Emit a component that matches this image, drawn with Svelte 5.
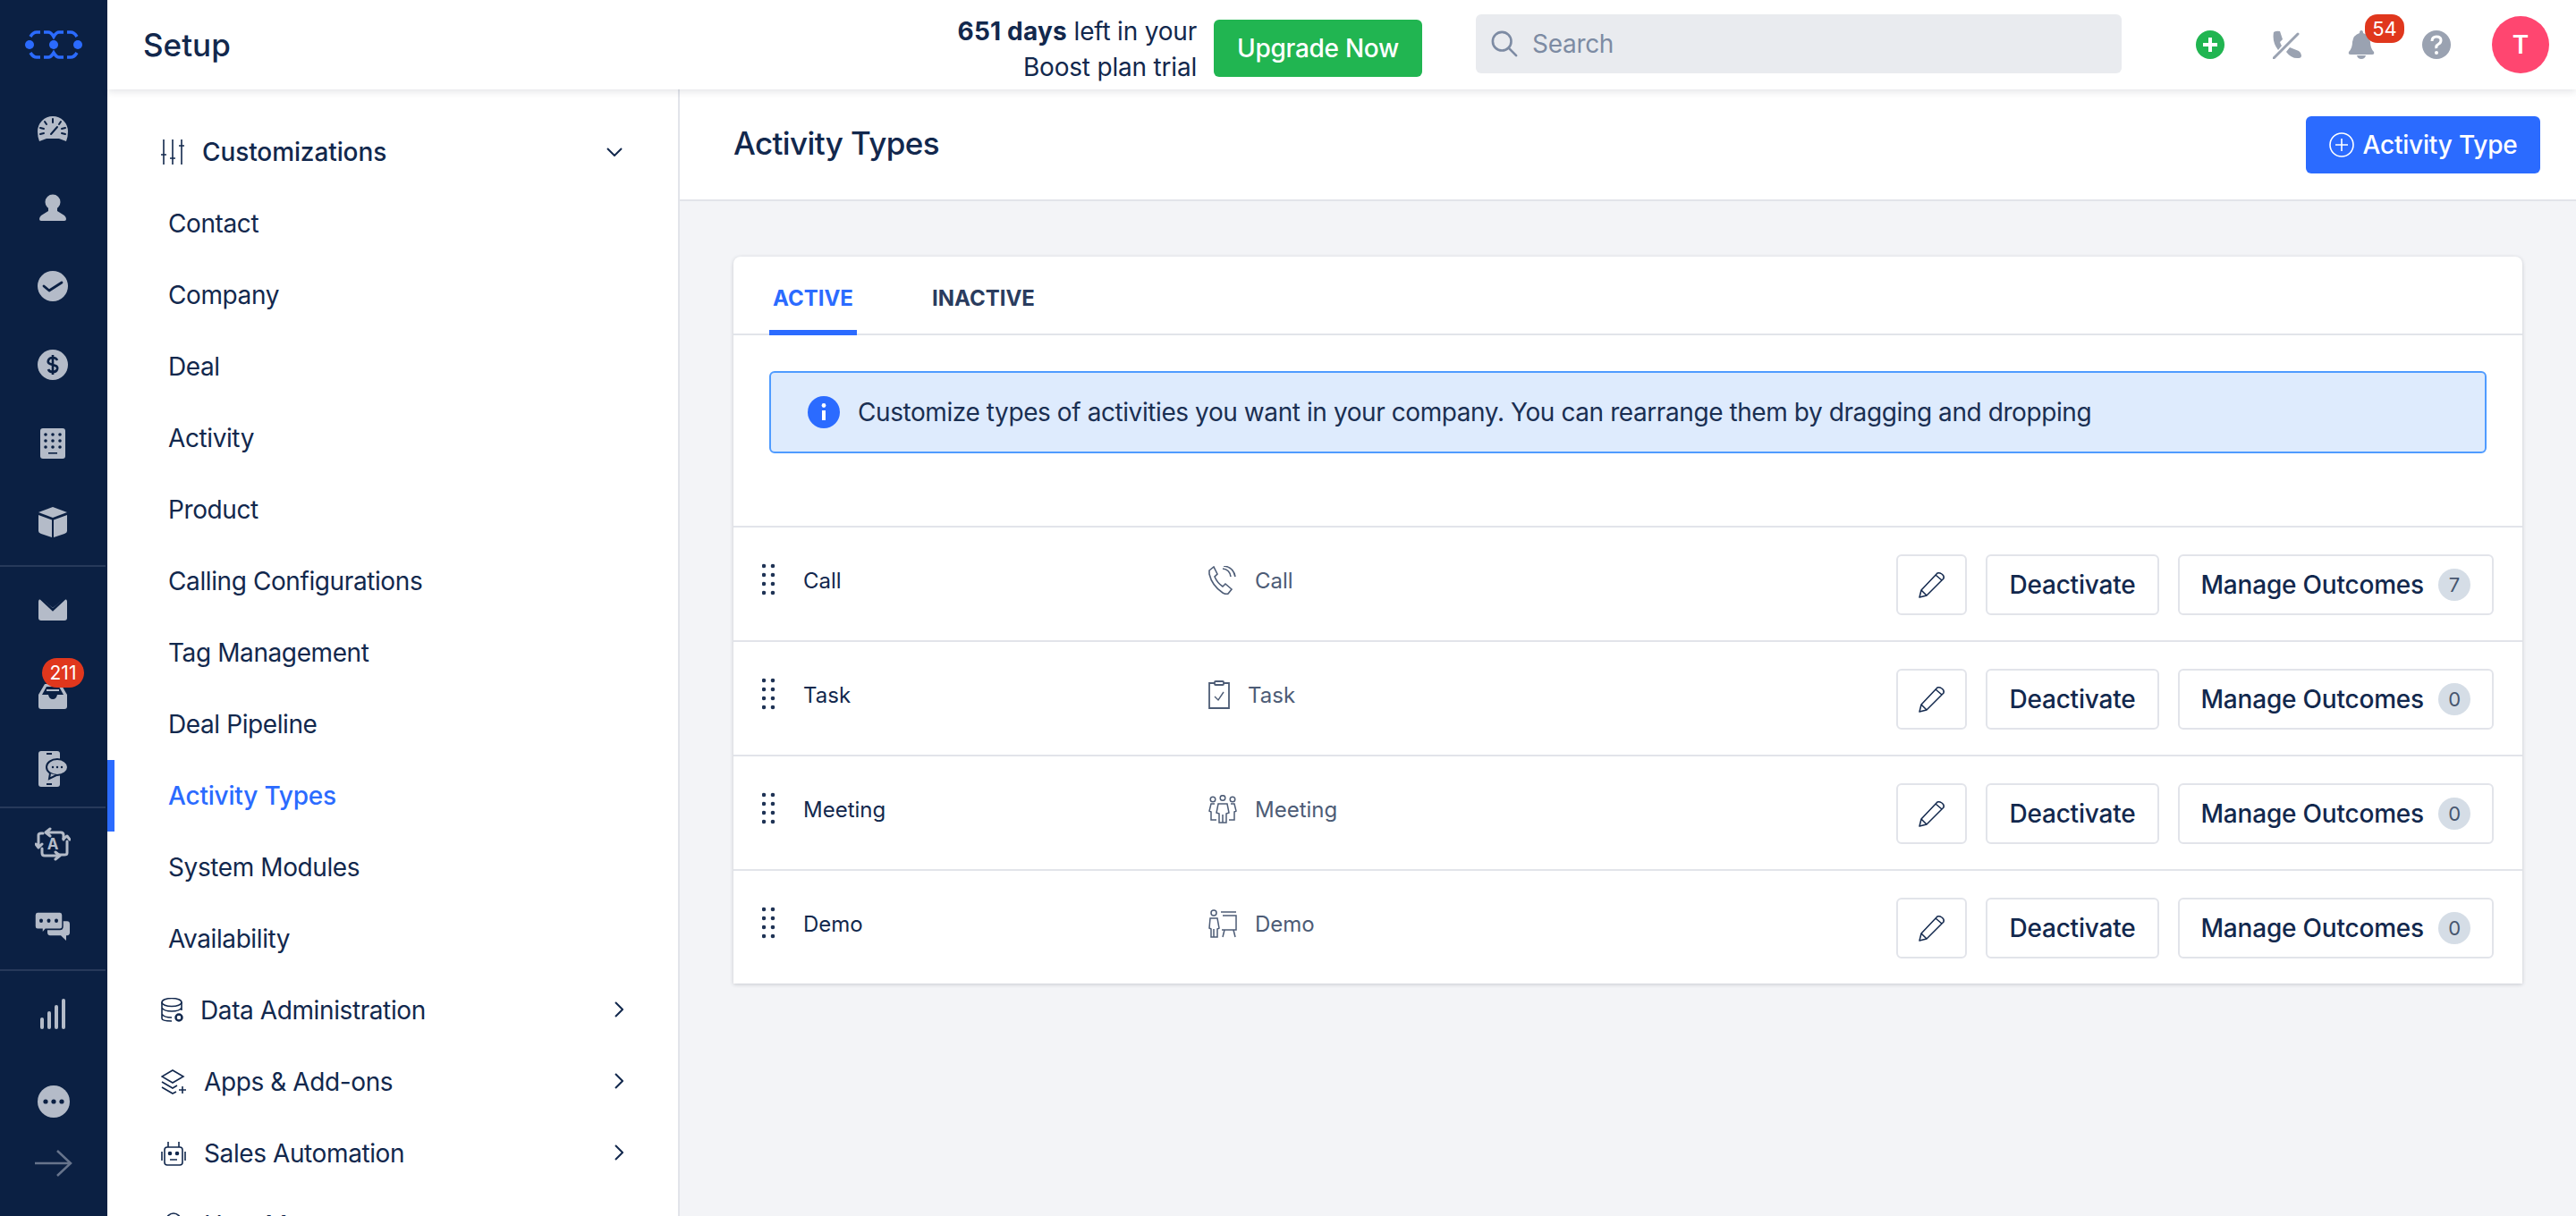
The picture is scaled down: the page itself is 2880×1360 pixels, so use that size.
<script>
  const sideItems = ['Contact', 'Company', 'Deal', 'Activity', 'Product', 'Calling Configurations', 'Tag Management', 'Deal Pipeline', 'Activity Types', 'System Modules', 'Availability'];

  const rows = [
    { name: 'Call', kind: 'call', outcomes: 7 },
    { name: 'Task', kind: 'task', outcomes: 0 },
    { name: 'Meeting', kind: 'meeting', outcomes: 0 },
    { name: 'Demo', kind: 'demo', outcomes: 0 }
  ];

  const dots = [[2, 4], [12, 4], [2, 14], [12, 14], [2, 24], [12, 24], [2, 34], [12, 34]];
</script>

<div class="shell">
  <nav class="rail">
    <div class="logo">
      <svg width="66" height="34" viewBox="0 0 66 34" fill="none" stroke="#2b6bff" stroke-width="3.5">
        <circle cx="6" cy="17" r="5" fill="#2b6bff" stroke="none" />
        <circle cx="33" cy="17" r="5" fill="#2b6bff" stroke="none" />
        <circle cx="60" cy="17" r="5" fill="#2b6bff" stroke="none" />
        <path d="M18 3h-4q-4 0-7 5M18 31h-4q-4 0-7-5" />
        <path d="M22 3h5q3 0 6 5q3-5 6-5h5M22 31h5q3 0 6-5q3 5 6 5h5" />
        <path d="M48 3h4q4 0 7 5M48 31h4q4 0 7-5" />
      </svg>
    </div>

    <div class="rail-group">
      <div class="rail-item">
        <svg width="36" height="32" viewBox="0 0 36 32">
          <path d="M1 19a17 17 0 0 1 34 0q0 6-2 11l-8-3H11l-8 3q-2-5-2-11z" fill="#b4bbc8" />
          <path d="M18 5v4M9 8l2 3M27 8l-2 3M4 15l4 1M32 15l-4 1M4 22l4-1M32 22l-4-1M16 22l7-8" stroke="#0b2043" stroke-width="2" stroke-linecap="round" />
        </svg>
      </div>
      <div class="rail-item">
        <svg width="30" height="30" viewBox="0 0 30 30" fill="#b4bbc8">
          <circle cx="15" cy="9" r="8.5" />
          <path d="M10 15h10v4l8 5q2 2 2 4t-2 2H2q-2 0-2-2t2-4l8-5z" />
        </svg>
      </div>
      <div class="rail-item">
        <svg width="34" height="34" viewBox="0 0 34 34">
          <circle cx="17" cy="17" r="17" fill="#b4bbc8" />
          <path d="M7 17l6 5 14-9" fill="none" stroke="#0b2043" stroke-width="2.8" stroke-linecap="round" stroke-linejoin="round" />
        </svg>
      </div>
      <div class="rail-item">
        <svg width="34" height="34" viewBox="0 0 34 34">
          <circle cx="17" cy="17" r="17" fill="#b4bbc8" />
          <path d="M22 12q-1-3-5-3t-5 3 2 4l6 2q3 1 2 4t-5 3-5-3M17 6v22" fill="none" stroke="#0b2043" stroke-width="2.6" />
        </svg>
      </div>
      <div class="rail-item">
        <svg width="28" height="34" viewBox="0 0 28 34">
          <rect width="28" height="34" rx="3" fill="#b4bbc8" />
          <g fill="#0b2043">
            <circle cx="6" cy="7" r="1.8" /><circle cx="14" cy="7" r="1.8" /><circle cx="22" cy="7" r="1.8" />
            <circle cx="6" cy="14" r="1.8" /><circle cx="14" cy="14" r="1.8" /><circle cx="22" cy="14" r="1.8" />
            <circle cx="6" cy="21" r="1.8" /><circle cx="14" cy="21" r="1.8" /><circle cx="22" cy="21" r="1.8" />
            <rect x="9" y="27" width="10" height="1.6" />
          </g>
        </svg>
      </div>
      <div class="rail-item">
        <svg width="32" height="34" viewBox="0 0 32 34" fill="#b4bbc8">
          <path d="M16 0l16 6-16 6L0 6z" />
          <path d="M0 9l15 5.5V34L3 30q-3-1-3-3zM32 9l-15 5.5V34l12-4q3-1 3-3z" />
        </svg>
      </div>
    </div>

    <div class="rail-group">
      <div class="rail-item">
        <svg class="mail" width="32" height="24" viewBox="0 0 32 24">
          <rect width="32" height="24" rx="3" fill="#b4bbc8" />
          <path d="M4 0h24L16 10z" fill="#0b2043" />
          <path d="M2 -1l14 13L30 -1" fill="none" stroke="#0b2043" stroke-width="2.500" />
        </svg>
      </div>
      <div class="rail-item">
        <svg class="inbox" width="32" height="28" viewBox="0 0 32 28">
          <path d="M7 0h18l7 12v13q0 3-3 3H3q-3 0-3-3V12z" fill="#b4bbc8" />
          <path d="M9 3h14l5 9h-7q-1 5-5 5t-5-5H4z" fill="#0b2043" />
          <path d="M9 7h14" stroke="#b4bbc8" stroke-width="2" />
        </svg>
        <span class="rail-badge">211</span>
      </div>
      <div class="rail-item">
        <svg class="chatphone" width="32" height="40" viewBox="0 0 32 40">
          <rect width="24" height="40" rx="3" fill="#b4bbc8" />
          <path d="M9 3h6M9 37h6" stroke="#0b2043" stroke-width="2" />
          <ellipse cx="21" cy="18" rx="12" ry="9" fill="#b4bbc8" stroke="#0b2043" stroke-width="2" />
          <path d="M13 25l-1 6 8-4" fill="#b4bbc8" stroke="#0b2043" stroke-width="2" />
          <g fill="#0b2043"><circle cx="16" cy="18" r="1.2" /><circle cx="21" cy="18" r="1.2" /><circle cx="26" cy="18" r="1.2" /></g>
        </svg>
      </div>
    </div>

    <div class="rail-group">
      <div class="rail-item">
        <svg class="cycle" width="40" height="38" viewBox="0 0 40 38" fill="none" stroke="#b4bbc8" stroke-width="3" stroke-linecap="round" stroke-linejoin="round">
          <path d="M13 6h16q3 0 3 3v5M17 2l-5 4 5 4" />
          <path d="M36 16v13q0 2-3 2H26M32 13l4-3 3 4" />
          <path d="M27 32H11q-3 0-3-3v-5M23 28l5 4-5 4" />
          <path d="M4 22V9q0-2 3-2h2M1 19l3 4 4-4" />
          <text x="20" y="25" text-anchor="middle" class="a-glyph">A</text>
        </svg>
      </div>
      <div class="rail-item">
        <svg width="40" height="32" viewBox="0 0 40 28" preserveAspectRatio="none">
          <path d="M14 9h22q3 0 3 3v8q0 3-3 3h-1v5l-6-5H17q-3 0-3-3z" fill="#b4bbc8" />
          <path d="M3 0h25q3 0 3 3v11q0 3-3 3H12l-4 4v-4H3q-3 0-3-3V3q0-3 3-3z" fill="#b4bbc8" stroke="#0b2043" stroke-width="1.5" />
          <g fill="#0b2043"><circle cx="7" cy="8.500" r="2" /><circle cx="15.500" cy="8.500" r="2" /><circle cx="24" cy="8.500" r="2" /></g>
        </svg>
      </div>
    </div>

    <div class="rail-group last">
      <div class="rail-item">
        <svg width="28" height="34" viewBox="0 0 28 34" fill="#b4bbc8">
          <rect y="21" width="4" height="13" rx="2" /><rect x="8" y="14" width="4" height="20" rx="2" />
          <rect x="16" y="7" width="4" height="27" rx="2" /><rect x="24" width="4" height="34" rx="2" />
        </svg>
      </div>
    </div>

    <div class="rail-item more">
      <svg width="36" height="36" viewBox="0 0 36 36">
        <circle cx="18" cy="18" r="18" fill="#b4bbc8" />
        <g fill="#0b2043"><circle cx="9" cy="18" r="2.6" /><circle cx="18" cy="18" r="2.6" /><circle cx="27" cy="18" r="2.6" /></g>
      </svg>
    </div>
    <div class="collapse">
      <svg width="42" height="32" viewBox="0 0 42 32" fill="none" stroke="#67748c" stroke-width="2.500">
        <path d="M0 16h40M25 2l15 14-15 14" />
      </svg>
    </div>
  </nav>

  <div class="page">
    <header class="topbar">
      <div class="top-title">Setup</div>
      <div class="trial"><b>651 days</b> left in your<br />Boost plan trial</div>
      <button class="upgrade">Upgrade Now</button>
      <div class="search">
        <svg width="30" height="30" viewBox="0 0 32 32" fill="none" stroke="#7d8ba3" stroke-width="2.800" stroke-linecap="round">
          <circle cx="13" cy="13" r="11" /><path d="M21 21l9 9" />
        </svg>
        <span>Search</span>
      </div>
      <div class="top-icons">
        <svg width="32" height="32" viewBox="0 0 32 32">
          <circle cx="16" cy="16" r="16" fill="#21b551" />
          <path d="M16 8v16M8 16h16" stroke="#fff" stroke-width="4" />
        </svg>
        <svg class="ic-phone" width="32" height="32" viewBox="0 0 32 32" fill="#9aa2b1">
          <path d="M1 2q3-2 7-1l3 9-3 3q1 3 2 4l-4 5Q-1 13 1 2zM15 24l4-5 10 4q3 2 3 5t-3 3q-8 1-14-7z" />
          <path d="M1 31L28 4" stroke="#9aa2b1" stroke-width="3" stroke-linecap="round" />
        </svg>
        <div class="bell">
          <svg width="30" height="32" viewBox="0 0 30 32" fill="#9aa2b1">
            <path d="M15 0q2 0 2 3 7 2 8 10 0 7 4 11 1 3-2 3H3q-3 0-2-3 4-4 4-11 1-8 8-10 0-3 2-3zM10 28h10q-1 4-5 4t-5-4z" />
          </svg>
          <span class="bell-badge">54</span>
        </div>
        <svg class="ic-help" width="32" height="32" viewBox="0 0 32 32">
          <circle cx="16" cy="16" r="16" fill="#9aa2b1" />
          <path d="M11 12q0-5 5-5t5 4q0 3-3 4.500t-2 4.500" fill="none" stroke="#fff" stroke-width="3" />
          <circle cx="16" cy="25" r="2" fill="#fff" />
        </svg>
        <div class="avatar">T</div>
      </div>
    </header>

    <div class="below">
      <aside class="side">
        <div class="side-head first">
          <svg width="26" height="28" viewBox="0 0 26 28" fill="none" stroke="#12284d" stroke-width="1.600">
            <path d="M3 0v28M13 0v28M23 0v28M0 17h6M10 21h6M20 7h6" />
          </svg>
          <span class="gap-a strong">Customizations</span>
          <svg class="chev" width="18" height="10" viewBox="0 0 18 10" fill="none" stroke="#12284d" stroke-width="2"><path d="M1 1l8 8 8-8" /></svg>
        </div>
        {#each sideItems as item}
          <div class="side-link" class:active={item === 'Activity Types'}>{item}</div>
        {/each}
        <div class="side-head">
          <svg width="26" height="28" viewBox="0 0 26 28" fill="none" stroke="#12284d" stroke-width="1.600">
            <ellipse cx="12" cy="5" rx="11" ry="4.500" />
            <path d="M1 5v18q0 3 11 3M23 5v9M1 11q2 4 11 4t11-4M1 18q2 4 11 4" />
            <circle cx="20" cy="22" r="3.500" stroke-width="2.500" />
          </svg>
          <span class="gap-b">Data Administration</span>
          <svg class="chev right" width="10" height="18" viewBox="0 0 10 18" fill="none" stroke="#12284d" stroke-width="2"><path d="M1 1l8 8-8 8" /></svg>
        </div>
        <div class="side-head">
          <svg width="28" height="28" viewBox="0 0 28 28" fill="none" stroke="#12284d" stroke-width="1.600">
            <path d="M13 1l12 7-12 7L1 8zM1 14l12 7 5-3M1 20l12 7 4-2M24 19v8M20 23h8" />
          </svg>
          <span class="gap-a">Apps &amp; Add-ons</span>
          <svg class="chev right" width="10" height="18" viewBox="0 0 10 18" fill="none" stroke="#12284d" stroke-width="2"><path d="M1 1l8 8-8 8" /></svg>
        </div>
        <div class="side-head">
          <svg width="28" height="28" viewBox="0 0 28 28" fill="none" stroke="#12284d" stroke-width="1.600">
            <rect x="4" y="7" width="20" height="20" rx="3" />
            <path d="M8 7V1M20 7V1M1 12v10M27 12v10M10 21h8" />
            <circle cx="10" cy="14" r="1.500" fill="#12284d" /><circle cx="18" cy="14" r="1.500" fill="#12284d" />
          </svg>
          <span class="gap-a">Sales Automation</span>
          <svg class="chev right" width="10" height="18" viewBox="0 0 10 18" fill="none" stroke="#12284d" stroke-width="2"><path d="M1 1l8 8-8 8" /></svg>
        </div>
        <div class="side-head">
          <svg width="28" height="28" viewBox="0 0 28 28" fill="none" stroke="#12284d" stroke-width="1.600">
            <circle cx="14" cy="9" r="8" />
            <path d="M2 27q2-10 12-10t12 10" />
          </svg>
          <span class="gap-a">User Management</span>
          <svg class="chev right" width="10" height="18" viewBox="0 0 10 18" fill="none" stroke="#12284d" stroke-width="2"><path d="M1 1l8 8-8 8" /></svg>
        </div>
      </aside>

      <main class="content">
        <div class="page-head">
          <h1>Activity Types</h1>
          <button class="primary">
            <svg width="28" height="28" viewBox="0 0 28 28" fill="none" stroke="#fff" stroke-width="1.600">
              <circle cx="14" cy="14" r="13" /><path d="M14 7v14M7 14h14" />
            </svg>
            Activity Type
          </button>
        </div>

        <div class="body">
          <section class="card">
            <div class="tabs">
              <div class="tab on">ACTIVE</div>
              <div class="tab">INACTIVE</div>
            </div>

            <div class="alert">
              <svg width="36" height="36" viewBox="0 0 36 36">
                <circle cx="18" cy="18" r="18" fill="#2b6bff" />
                <circle cx="18" cy="10.500" r="2.400" fill="#fff" />
                <path d="M18 16v11" stroke="#fff" stroke-width="4" />
              </svg>
              <span>Customize types of activities you want in your company. You can rearrange them by dragging and dropping</span>
            </div>

            <div class="list">
              {#each rows as row}
                <div class="row">
                  <svg class="drag" width="16" height="36" viewBox="0 0 16 36" fill="#1f3355">
                    {#each dots as d}
                      <circle cx={d[0]} cy={d[1] - 1} r="2.300" />
                    {/each}
                  </svg>
                  <div class="row-name">{row.name}</div>
                  <div class="row-kind">
                    {#if row.kind === 'call'}
                      <svg width="32" height="32" viewBox="0 0 32 32" fill="none" stroke="#4d5c76" stroke-width="1.600">
                        <path d="M1 5l5-4 4 8-3 3q3 7 9 11l3-3 7 6-4 5q-3 1-6-1Q4 22 1 9z" />
                        <path d="M16 3q8 1 9 9M17 0q11 1 13 12" />
                      </svg>
                    {:else if row.kind === 'task'}
                      <svg width="24" height="32" viewBox="0 0 24 32" fill="none" stroke="#4d5c76" stroke-width="1.800">
                        <path d="M7 3H1v28h22V3h-6" />
                        <rect x="7" y="1" width="10" height="4" rx="1" />
                        <path d="M7 18l4 4 6-9" stroke-width="1.400" />
                      </svg>
                    {:else if row.kind === 'meeting'}
                      <svg width="32" height="32" viewBox="0 0 32 32" fill="none" stroke="#4d5c76" stroke-width="1.500">
                        <circle cx="16" cy="3.500" r="2.800" /><circle cx="5" cy="5" r="2.800" /><circle cx="27" cy="5" r="2.800" />
                        <path d="M11 10h10l2 10-3 1v10h-8V21l-3-1zM16 22v9" />
                        <path d="M7 10H3l-2 8 2 1v9h6M25 10h4l2 8-2 1v9h-6" />
                      </svg>
                    {:else}
                      <svg width="32" height="32" viewBox="0 0 32 32" fill="none" stroke="#4d5c76" stroke-width="1.500">
                        <circle cx="6" cy="4" r="3" />
                        <path d="M2 10h8l2 11-2 1v9H3v-9l-2-1zM6 22v9M14 3h17M16 7h15v16H15M18 23l-2 8M28 23l2 8" />
                      </svg>
                    {/if}
                    <span>{row.name}</span>
                  </div>
                  <div class="row-actions">
                    <button class="outline square" aria-label="Edit">
                      <svg width="30" height="30" viewBox="0 0 30 30" fill="none" stroke="#12284d" stroke-width="1.500" stroke-linejoin="round">
                        <path d="M1 29l2-8L21 2q2-1 5 1t2 5L9 27zM3 21l6 6M19 4l7 6" />
                      </svg>
                    </button>
                    <button class="outline">Deactivate</button>
                    <button class="outline outcomes">
                      Manage Outcomes
                      <span class="count">{row.outcomes}</span>
                    </button>
                  </div>
                </div>
              {/each}
            </div>
          </section>
        </div>
      </main>
    </div>
  </div>
</div>

<style>
  :global(body) {
    margin: 0;
    font-family: Inter, "Noto Sans", sans-serif;
    color: #12284d;
  }

  button {
    font-family: inherit;
    cursor: pointer;
  }

  .shell {
    display: flex;
    width: 2880px;
    height: 1360px;
    overflow: hidden;
  }

  /* dark icon rail */
  .rail {
    width: 120px;
    flex: none;
    background: #0b2043;
    display: flex;
    flex-direction: column;
  }

  .logo {
    height: 100px;
    display: flex;
    align-items: center;
    justify-content: center;
  }

  .rail-group {
    padding-bottom: 4px;
    border-bottom: 2px solid #27395a;
    margin-right: 2px;
  }

  .rail-group.last {
    border-bottom: none;
    padding: 4px 0 0;
  }

  .rail-item {
    position: relative;
    height: 88px;
    display: flex;
    align-items: center;
    justify-content: center;
  }

  .rail-item.more {
    margin-top: 10px;
  }

  /* these few sit a little off the 88px rhythm */
  .mail {
    margin-top: 8px;
  }

  .inbox {
    margin-top: 26px;
  }

  .chatphone {
    margin-top: 12px;
  }

  .cycle {
    margin-bottom: 8px;
  }

  .collapse {
    height: 50px;
    display: flex;
    align-items: center;
    justify-content: center;
  }

  .a-glyph {
    font: 700 17px Inter, sans-serif;
    fill: #b4bbc8;
    stroke: none;
  }

  .rail-badge {
    position: absolute;
    left: 47px;
    top: 14px;
    width: 47px;
    height: 33px;
    border-radius: 17px;
    background: #e0371d;
    color: #fff;
    font-size: 21px;
    line-height: 33px;
    text-align: center;
  }

  .page {
    flex: 1;
    min-width: 0;
    display: flex;
    flex-direction: column;
  }

  /* top bar */
  .topbar {
    position: relative;
    z-index: 2;
    height: 100px;
    flex: none;
    background: #fff;
    box-shadow: 0 2px 8px rgba(40, 50, 70, 0.14);
    display: flex;
    align-items: center;
  }

  .top-title {
    margin-left: 40px;
    font-size: 35px;
    font-weight: 500;
    flex: 1;
  }

  .trial {
    font-size: 28px;
    line-height: 40px;
    text-align: right;
    margin-right: 19px;
    margin-top: 9px;
    letter-spacing: -0.2px;
  }

  .trial b {
    font-weight: 700;
    letter-spacing: 0.2px;
  }

  .upgrade {
    width: 233px;
    height: 64px;
    margin: 8px 60px 0 0;
    border: none;
    border-radius: 6px;
    background: #21b551;
    color: #fff;
    font-size: 28px;
    font-weight: 500;
    letter-spacing: -0.3px;
  }

  .search {
    width: 722px;
    height: 66px;
    margin-top: -2px;
    box-sizing: border-box;
    padding-left: 17px;
    background: #e9ebef;
    border-radius: 6px;
    display: flex;
    align-items: center;
    gap: 16px;
    color: #7d8ba3;
    font-size: 28px;
    letter-spacing: -0.3px;
  }

  .top-icons {
    width: 508px;
    flex: none;
    box-sizing: border-box;
    padding-left: 83px;
    display: flex;
    align-items: center;
  }

  .ic-phone {
    margin-left: 54px;
  }

  .bell {
    position: relative;
    width: 30px;
    height: 32px;
    margin-left: 52px;
  }

  .bell-badge {
    position: absolute;
    left: 19px;
    top: -18px;
    width: 44px;
    height: 32px;
    border-radius: 14px;
    background: #e0371d;
    color: #fff;
    font-size: 22px;
    line-height: 32px;
    text-align: center;
  }

  .ic-help {
    margin-left: 53px;
  }

  .avatar {
    width: 64px;
    height: 64px;
    margin-left: 46px;
    border-radius: 50%;
    background: #ff4670;
    color: #fff;
    font-size: 28px;
    font-weight: 600;
    line-height: 64px;
    text-align: center;
  }

  .below {
    flex: 1;
    min-height: 0;
    display: flex;
  }

  /* setup sidebar */
  .side {
    width: 640px;
    flex: none;
    box-sizing: border-box;
    padding-top: 30px;
    background: #fff;
    border-right: 2px solid #e2e4ea;
    overflow: hidden;
  }

  .side-head {
    height: 80px;
    display: flex;
    align-items: center;
    padding-left: 60px;
    font-size: 28px;
    letter-spacing: -0.4px;
    position: relative;
  }

  .gap-a {
    margin-left: 20px;
  }

  .gap-b {
    margin-left: 18px;
  }

  .strong {
    font-weight: 500;
    letter-spacing: -0.1px;
  }

  .chev {
    position: absolute;
    left: 558px;
    top: 35px;
  }

  .chev.right {
    left: 567px;
    top: 30px;
  }

  .side-link {
    height: 80px;
    line-height: 80px;
    padding-left: 68px;
    font-size: 28px;
    letter-spacing: -0.4px;
    position: relative;
  }

  .side-link.active {
    color: #2b6bff;
    font-weight: 500;
    letter-spacing: -0.2px;
  }

  .side-link.active::before {
    content: '';
    position: absolute;
    left: 0;
    top: 0;
    width: 8px;
    height: 80px;
    background: #2b6bff;
  }

  /* content */
  .content {
    flex: 1;
    min-width: 0;
    background: #f3f4f7;
  }

  .page-head {
    height: 125px;
    box-sizing: border-box;
    padding: 30px 40px 0 60px;
    background: #fff;
    border-bottom: 2px solid #e2e4ea;
    display: flex;
    justify-content: space-between;
    align-items: flex-start;
  }

  h1 {
    margin: 0;
    font-size: 35px;
    font-weight: 500;
    line-height: 60px;
    letter-spacing: -0.6px;
  }

  .primary {
    height: 64px;
    width: 262px;
    border: none;
    border-radius: 6px;
    background: #2b6bff;
    color: #fff;
    font-size: 28px;
    font-weight: 500;
    letter-spacing: -0.2px;
    display: flex;
    align-items: center;
    justify-content: center;
    gap: 10px;
  }

  .body {
    padding: 62px 60px 0;
  }

  .card {
    background: #fff;
    border-radius: 8px 8px 0 0;
    box-shadow: 0 1px 4px rgba(40, 50, 70, 0.22);
  }

  .tabs {
    height: 88px;
    box-sizing: border-box;
    padding-left: 40px;
    border-bottom: 2px solid #e2e4ea;
    display: flex;
    gap: 80px;
  }

  .tab {
    padding: 0 4px;
    font-size: 24px;
    font-weight: 700;
    line-height: 94px;
    color: #2a3c5e;
  }

  .tab.on {
    width: 98px;
    padding: 0;
    text-align: center;
    color: #2b6bff;
    height: 88px;
    box-sizing: border-box;
    border-bottom: 6px solid #2b6bff;
  }

  .alert {
    margin: 40px 40px 0;
    height: 92px;
    box-sizing: border-box;
    padding-left: 41px;
    background: #deebfd;
    border: 2px solid #4f9bff;
    border-radius: 6px;
    display: flex;
    align-items: center;
    gap: 20px;
    font-size: 28px;
    letter-spacing: -0.42px;
    color: #1a2f52;
  }

  .list {
    margin-top: 81px;
  }

  .row {
    height: 128px;
    box-sizing: border-box;
    border-top: 2px solid #e2e4ea;
    display: flex;
    align-items: center;
    position: relative;
    padding-left: 32px;
  }

  .drag {
    flex: none;
    margin-top: -10px;
  }

  .row-name {
    width: 453px;
    margin-left: 30px;
    font-size: 24px;
    margin-top: -8px;
  }

  .row-kind {
    display: flex;
    align-items: center;
    gap: 20px;
    color: #4d5c76;
    font-size: 24px;
    margin-top: -8px;
  }

  .row-actions {
    margin-left: auto;
    margin-right: 32px;
    display: flex;
    gap: 21px;
    margin-top: 2px;
  }

  .outline {
    height: 68px;
    box-sizing: border-box;
    padding: 0 24px;
    background: #fff;
    border: 2px solid #e2e4ea;
    border-radius: 6px;
    color: #12284d;
    font-size: 28px;
    font-weight: 500;
    letter-spacing: -0.2px;
    display: flex;
    align-items: center;
  }

  .square {
    width: 79px;
    padding: 0;
    justify-content: center;
  }

  .outcomes {
    gap: 16px;
  }

  .count {
    width: 36px;
    height: 36px;
    border-radius: 50%;
    background: #d5dde6;
    color: #47566f;
    font-size: 22px;
    font-weight: 400;
    line-height: 36px;
    text-align: center;
  }
</style>
